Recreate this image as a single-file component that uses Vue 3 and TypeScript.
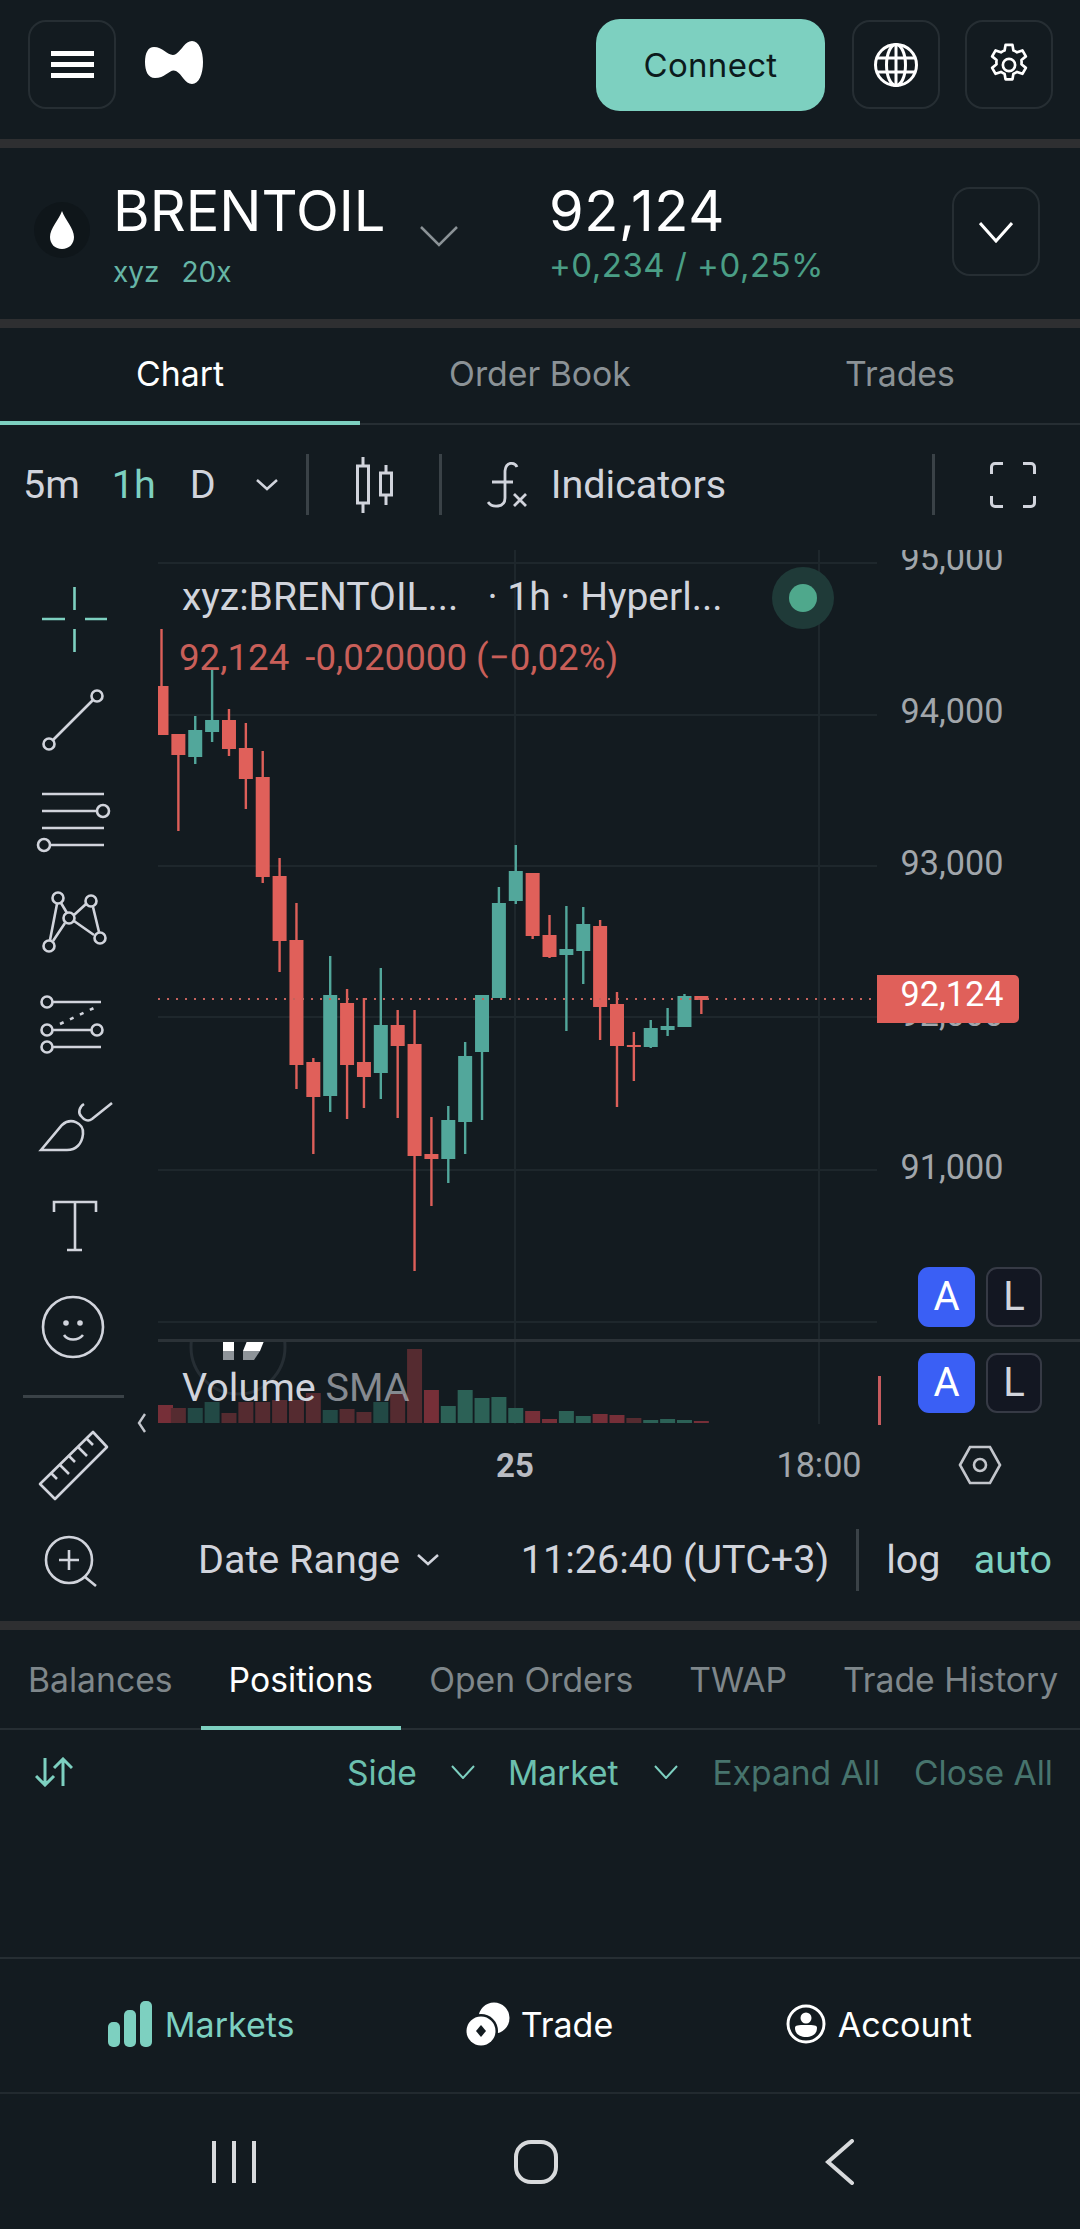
<template>
  <div class="app">
    <header class="topbar">
      <button class="icon-btn menu">
        <span /><span /><span />
      </button>
      <svg class="logo" width="58" height="43" viewBox="0 0 58 43">
        <path
          fill="#fff"
          d="M58 21C58 33 54 43 47 43C40 43 37 33 31 30C25 27 21 37 10 37C3 37 0 30 0 21C0 12 3 6 9 6C19 6 24 17 31 13C37 9 40 0 47 0C54 0 58 10 58 21Z"
        />
      </svg>
      <button class="connect">Connect</button>
      <button class="icon-btn globe">
        <svg width="46" height="46" viewBox="0 0 46 46" fill="none" stroke="#fff" stroke-width="3">
          <circle cx="23" cy="23" r="20.5" />
          <ellipse cx="23" cy="23" rx="9.5" ry="20.5" />
          <path d="M23 2.5V43.5M3 16H43M3 30H43" />
        </svg>
      </button>
      <button class="icon-btn gear">
        <svg width="46" height="46" viewBox="0 0 24 24" fill="none" stroke="#fff" stroke-width="1.4" stroke-linejoin="round">
          <circle cx="12" cy="12" r="3.2" />
          <path d="M10.2 1.5h3.6l.5 2.9c.7.2 1.3.6 1.9 1l2.8-1 1.8 3.1-2.3 1.9c.1.7.1 1.5 0 2.2l2.3 1.9-1.8 3.1-2.8-1c-.6.4-1.2.8-1.9 1l-.5 2.9h-3.6l-.5-2.9c-.7-.2-1.3-.6-1.9-1l-2.8 1-1.8-3.1 2.3-1.9c-.1-.7-.1-1.5 0-2.2L3.2 7.5 5 4.4l2.8 1c.6-.4 1.2-.8 1.9-1z" />
        </svg>
      </button>
    </header>
    <div class="band" />

    <section class="symbol">
      <div class="drop-wrap">
        <svg width="24" height="38" viewBox="0 0 24 38">
          <path fill="#fff" d="M12 0C15 9 24 17 24 26C24 33 19 38 12 38C5 38 0 33 0 26C0 17 9 9 12 0Z" />
        </svg>
      </div>
      <div class="name-col">
        <div class="name">BRENTOIL</div>
        <div class="tags"><span>xyz</span><span>20x</span></div>
      </div>
      <svg class="name-chev" width="38" height="22" viewBox="0 0 38 22" fill="none" stroke="#8b9296" stroke-width="2.5">
        <path d="M1 2L19 20L37 2" />
      </svg>
      <div class="price-col">
        <div class="price">92,124</div>
        <div class="change">+0,234 / +0,25%</div>
      </div>
      <button class="icon-btn expand">
        <svg width="34" height="22" viewBox="0 0 34 22" fill="none" stroke="#fff" stroke-width="3">
          <path d="M1 2L17 20L33 2" />
        </svg>
      </button>
    </section>
    <div class="band" />

    <nav class="chart-tabs">
      <div v-for="t in chartTabs" :key="t" class="chart-tab" :class="{ active: t === 'Chart' }">{{ t }}</div>
    </nav>

    <div class="tv-toolbar">
      <span class="tf">5m</span>
      <span class="tf tf-active">1h</span>
      <span class="tf tf-d">D</span>
      <svg class="tf-chev" width="22" height="12" viewBox="0 0 22 12" fill="none" stroke="#d1d4dc" stroke-width="2.5">
        <path d="M1 1L11 10L21 1" />
      </svg>
      <i class="vline first" />
      <svg class="candle-ico" width="38" height="56" viewBox="0 0 38 56" fill="none" stroke="#d1d4dc" stroke-width="3">
        <path d="M7 0V9M7 46V56M30 8V16M30 38V48" />
        <rect x="1.5" y="9" width="11" height="37" />
        <rect x="24.5" y="16" width="11" height="22" />
      </svg>
      <i class="vline second" />
      <svg class="fx-ico" width="40" height="48" viewBox="0 0 40 48" fill="none" stroke="#d1d4dc" stroke-width="2.8">
        <path d="M30 6C28 1 19 0 18 10V37C18 47 5 47 1 41M5 21H26M27 33L39 45M39 33L27 45" />
      </svg>
      <span class="indicators">Indicators</span>
      <i class="vline third" />
      <svg class="full-ico" width="46" height="46" viewBox="0 0 46 46" fill="none" stroke="#d1d4dc" stroke-width="3">
        <path d="M1.5 12V5C1.5 3 3 1.5 5 1.5H13M33 1.5H41C43 1.5 44.5 3 44.5 5V12M44.5 34V41C44.5 43 43 44.5 41 44.5H33M13 44.5H5C3 44.5 1.5 43 1.5 41V34" />
      </svg>
    </div>

    <div class="chart-main">
      <aside class="tools">
        <div class="tool">
          <svg class="ico active-tool" viewBox="0 0 80 80">
            <path d="M8 40H31M51 40H73M40.5 8V31M40.5 50V73" />
          </svg>
        </div>
        <div class="tool">
          <svg class="ico" viewBox="0 0 80 80">
            <circle cx="63" cy="16" r="5.5" />
            <circle cx="15" cy="64" r="5.5" />
            <path d="M59 20L19 60" />
          </svg>
        </div>
        <div class="tool">
          <svg class="ico" viewBox="0 0 80 80">
            <path d="M8 13H70M8 30H63M8 47H70M16 64H70" />
            <circle cx="69" cy="30" r="6" />
            <circle cx="10" cy="64" r="6" />
          </svg>
        </div>
        <div class="tool">
          <svg class="ico" viewBox="0 0 80 80">
            <path d="M23 22L16 58M27 21L33 31M40 33L52 22M59 25L65 50M40 39L60 53M31 41L19 59" />
            <circle cx="24" cy="16" r="5.5" />
            <circle cx="57" cy="19" r="5.5" />
            <circle cx="66" cy="56" r="5.5" />
            <circle cx="15" cy="64" r="5.5" />
            <circle cx="35" cy="36" r="5.5" />
          </svg>
        </div>
        <div class="tool">
          <svg class="ico" viewBox="0 0 80 80">
            <path d="M19 19H67M19 47H57M19 64H67" />
            <path d="M26 41L62 24" stroke-dasharray="4 7" />
            <circle cx="13" cy="19" r="5.5" />
            <circle cx="13" cy="47" r="5.5" />
            <circle cx="63" cy="47" r="5.5" />
            <circle cx="13" cy="64" r="5.5" />
          </svg>
        </div>
        <div class="tool">
          <svg class="ico" viewBox="0 0 80 80">
            <path d="M7 66L28 41C37 33 50 39 49 50C48 60 42 66 33 66Z" />
            <path d="M50 20C45 23 44 29 47 32C50 36 54 38 58 35L78 19" />
          </svg>
        </div>
        <div class="tool">
          <svg class="ico" viewBox="0 0 80 80">
            <path d="M20 27V17H62V27M41 17V65M33 65H48" />
          </svg>
        </div>
        <div class="tool">
          <svg class="ico" viewBox="0 0 80 80">
            <circle cx="39" cy="41" r="30" />
            <circle cx="32" cy="37" r="2.8" class="dot" />
            <circle cx="46" cy="37" r="2.8" class="dot" />
            <path d="M30 49C34 55 44 55 49 49" />
          </svg>
        </div>
        <div class="tools-sep" />
        <div class="tool ruler">
          <svg class="ico" viewBox="0 0 80 80">
            <path d="M6 58L59 6L73 21L21 73Z" stroke-linejoin="round" />
            <path d="M17 47L23 53M26 39L35 48M35 30L41 36M44 21L53 30M53 13L59 19" />
          </svg>
        </div>
        <div class="tool">
          <svg class="ico" viewBox="0 0 80 80">
            <circle cx="35" cy="33" r="23" />
            <path d="M51 50L62 59M35 23V43M25 33H45" />
          </svg>
        </div>
      </aside>

      <div class="chart-col">
        <div class="canvas">
          <svg class="plot" width="922" height="960" viewBox="158 550 922 960">
            <defs>
              <clipPath id="below-sep"><rect x="158" y="1342" width="922" height="90" /></clipPath>
            </defs>
            <g stroke="#1e272c" stroke-width="2">
              <line v-for="y in gridY" :key="y" x1="158" x2="877" :y1="y" :y2="y" />
              <line x1="515" x2="515" y1="550" y2="1424" />
              <line x1="819" x2="819" y1="550" y2="1424" />
            </g>

            <g clip-path="url(#below-sep)">
              <circle cx="238" cy="1347" r="47" fill="none" stroke="#262e34" stroke-width="3" />
              <rect x="223" y="1341" width="11" height="10" fill="#fff" />
              <rect x="223" y="1351" width="11" height="9" fill="#8e9499" />
              <path d="M247 1341H264L260 1351H243Z" fill="#fff" />
              <path d="M243 1351H260L254 1360H243Z" fill="#8e9499" />
            </g>

            <rect
              v-for="b in volume"
              :key="b.x"
              :x="b.x"
              :y="b.top"
              width="15"
              :height="1423 - b.top"
              :fill="volColors[b.kind]"
            />
            <rect x="878" y="1376" width="3" height="49" fill="#c65b5e" />

            <g v-for="c in candles" :key="c.x">
              <line
                :x1="c.x"
                :x2="c.x"
                :y1="c.high"
                :y2="c.low"
                :stroke="c.up ? '#52a79b' : '#dd5f59'"
                stroke-width="2.4"
              />
              <rect
                :x="c.x - 7"
                :y="c.top"
                width="14"
                :height="c.bottom - c.top"
                :fill="c.up ? '#52a79b' : '#e0605a'"
              />
            </g>

            <line x1="158" x2="877" y1="999" y2="999" stroke="#c4625c" stroke-width="2" stroke-dasharray="2 7" />
            <rect x="158" y="1339" width="922" height="3" fill="#2b3237" />

            <g class="axis">
              <text v-for="l in priceLabels" :key="l.t" x="952" :y="l.y" text-anchor="middle">{{ l.t }}</text>
            </g>
            <path d="M877 975H1014A5 5 0 0 1 1019 980V1018A5 5 0 0 1 1014 1023H877Z" fill="#e0605a" />
            <text class="last-price" x="952" y="1006" text-anchor="middle">92,124</text>

            <text class="axis bold" x="515" y="1477" text-anchor="middle">25</text>
            <text class="axis" x="819" y="1477" text-anchor="middle">18:00</text>
            <g fill="none" stroke="#c3c6cc" stroke-width="2.6">
              <path d="M960 1465L970 1447H990L1000 1465L990 1483H970Z" />
              <circle cx="980" cy="1465" r="6" />
            </g>
          </svg>

          <div class="legend">
            <div class="legend-row">
              <span>xyz:BRENTOIL...</span>
              <span class="legend-meta">· 1h · Hyperl...</span>
            </div>
            <div class="legend-row red">
              <span>92,124</span>
              <span class="legend-delta">-0,020000 (−0,02%)</span>
            </div>
          </div>
          <div class="live"><i /></div>
          <div class="volume-label">Volume <span>SMA</span></div>
          <div class="collapse">
            <svg width="10" height="20" viewBox="0 0 10 20" fill="none" stroke="#c3c6cc" stroke-width="2.4">
              <path d="M8 1L2 10L8 19" />
            </svg>
          </div>
          <div class="scale-btns one"><b>A</b><em>L</em></div>
          <div class="scale-btns two"><b>A</b><em>L</em></div>
        </div>

        <div class="range-bar">
          <span class="range">Date Range</span>
          <svg class="range-chev" width="22" height="12" viewBox="0 0 22 12" fill="none" stroke="#d1d4dc" stroke-width="2.5">
            <path d="M1 1L11 10L21 1" />
          </svg>
          <span class="clock">11:26:40 (UTC+3)</span>
          <i class="range-sep" />
          <span class="log">log</span>
          <span class="auto">auto</span>
        </div>
      </div>
    </div>
    <div class="band" />

    <nav class="account-tabs">
      <div v-for="t in accountTabs" :key="t" class="account-tab" :class="{ active: t === 'Positions' }">{{ t }}</div>
    </nav>
    <div class="filters">
      <svg width="38" height="30" viewBox="0 0 38 30" fill="none" stroke="#7dd0c0" stroke-width="3">
        <path d="M10 1V28M1 19L10 28L19 19M28 29V2M19 11L28 2L37 11" />
      </svg>
      <span class="filter side">Side</span>
      <svg class="f-chev side-chev" width="24" height="14" viewBox="0 0 24 14" fill="none" stroke="#7dd0c0" stroke-width="2">
        <path d="M1 1L12 13L23 1" />
      </svg>
      <span class="filter market">Market</span>
      <svg class="f-chev" width="24" height="14" viewBox="0 0 24 14" fill="none" stroke="#7dd0c0" stroke-width="2">
        <path d="M1 1L12 13L23 1" />
      </svg>
      <span class="filter dim expand-all">Expand All</span>
      <span class="filter dim close-all">Close All</span>
    </div>
    <div class="empty" />

    <footer class="bottom-nav">
      <div class="nav-item teal">
        <svg width="44" height="46" viewBox="0 0 44 46" fill="#7dd0c0">
          <rect x="0" y="21" width="12" height="25" rx="5" />
          <rect x="16" y="9" width="12" height="37" rx="5" />
          <rect x="32" y="0" width="12" height="46" rx="5" />
        </svg>
        Markets
      </div>
      <div class="nav-item trade">
        <svg width="44" height="44" viewBox="0 0 44 44">
          <circle cx="28" cy="16" r="15.5" fill="#fff" />
          <circle cx="15" cy="29" r="17" fill="#131b20" />
          <circle cx="15" cy="29" r="14.5" fill="#fff" />
          <path d="M15 23L20 29L15 35L10 29Z" fill="#131b20" />
        </svg>
        Trade
      </div>
      <div class="nav-item account">
        <svg width="40" height="40" viewBox="0 0 40 40">
          <circle cx="20" cy="20" r="18" fill="none" stroke="#fff" stroke-width="3" />
          <circle cx="20" cy="14" r="5.5" fill="#fff" />
          <path d="M9 24C9 21 12 21 20 21C28 21 31 21 31 24C31 30 26 33 20 33C14 33 9 30 9 24Z" fill="#fff" />
        </svg>
        Account
      </div>
    </footer>

    <div class="system-nav">
      <svg width="44" height="44" viewBox="0 0 44 44" stroke="#d8dadc" stroke-width="4">
        <path d="M2 1V43M22 1V43M42 1V43" />
      </svg>
      <svg width="46" height="46" viewBox="0 0 46 46" fill="none" stroke="#d8dadc" stroke-width="4">
        <rect x="3" y="3" width="40" height="40" rx="15" />
      </svg>
      <svg width="30" height="46" viewBox="0 0 30 46" fill="none" stroke="#d8dadc" stroke-width="4" stroke-linecap="round">
        <path d="M27 2L3 23L27 44" />
      </svg>
    </div>
  </div>
</template>

<script setup lang="ts">
type Candle = { x: number; high: number; top: number; bottom: number; low: number; up: boolean };

const chartTabs = ["Chart", "Order Book", "Trades"];
const accountTabs = ["Balances", "Positions", "Open Orders", "TWAP", "Trade History"];

const gridY = [563, 715, 866, 1017, 1170, 1322];

const priceLabels = [
  { t: "95,000", y: 570 },
  { t: "94,000", y: 723 },
  { t: "93,000", y: 875 },
  { t: "92,000", y: 1026 },
  { t: "91,000", y: 1179 },
];

// high, body top, body bottom, low, direction
const raw: [number, number, number, number, number][] = [
  [629, 686, 735, 735, 0],
  [734, 734, 755, 831, 0],
  [716, 730, 757, 764, 1],
  [669, 720, 732, 742, 1],
  [709, 720, 749, 756, 0],
  [723, 748, 779, 809, 0],
  [751, 777, 877, 883, 0],
  [858, 876, 941, 972, 0],
  [903, 940, 1065, 1089, 0],
  [1058, 1062, 1097, 1154, 0],
  [956, 995, 1096, 1112, 1],
  [989, 1003, 1065, 1119, 0],
  [998, 1062, 1077, 1108, 0],
  [968, 1025, 1073, 1099, 1],
  [1010, 1025, 1046, 1118, 0],
  [1010, 1044, 1156, 1271, 0],
  [1117, 1154, 1159, 1206, 0],
  [1106, 1120, 1159, 1183, 1],
  [1042, 1056, 1122, 1154, 1],
  [995, 995, 1052, 1120, 1],
  [887, 903, 998, 998, 1],
  [845, 871, 901, 904, 1],
  [873, 873, 936, 939, 0],
  [915, 935, 957, 958, 0],
  [906, 949, 955, 1031, 1],
  [907, 924, 951, 984, 1],
  [920, 926, 1007, 1040, 0],
  [992, 1004, 1046, 1107, 0],
  [1032, 1045, 1047, 1081, 0],
  [1020, 1028, 1047, 1048, 1],
  [1008, 1026, 1030, 1036, 1],
  [994, 996, 1027, 1027, 1],
  [996, 996, 1000, 1014, 0],
];

const candles: Candle[] = raw.map((r, i) => ({
  x: 161.5 + i * 16.87,
  high: r[0],
  top: r[1],
  bottom: r[2],
  low: r[3],
  up: r[4] === 1,
}));

const volColors: Record<string, string> = {
  r: "#552b30",
  R: "#762f38",
  g: "#224945",
  G: "#2c6156",
};

const volTops: [number, string][] = [
  [1405, "R"], [1408, "r"], [1408, "g"], [1402, "g"], [1413, "r"], [1402, "r"], [1402, "r"], [1400, "r"],
  [1400, "r"], [1393, "r"], [1410, "g"], [1409, "r"], [1412, "r"], [1402, "g"], [1394, "r"], [1349, "r"],
  [1390, "R"], [1406, "G"], [1390, "G"], [1398, "G"], [1397, "G"], [1408, "G"], [1411, "R"], [1419, "R"],
  [1411, "G"], [1416, "G"], [1414, "R"], [1415, "R"], [1418, "r"], [1420, "G"], [1419, "G"], [1420, "G"], [1421, "R"],
];

const volume = volTops.map(([top, kind], i) => ({
  x: i === 0 ? 158 : 154 + i * 16.87,
  top,
  kind,
}));
</script>

<style>
html,
body {
  margin: 0;
  background: #131b20;
}
</style>

<style scoped>
.app {
  width: 1080px;
  height: 2229px;
  background: #131b20;
  color: #fff;
  font-family: Inter, "Noto Sans", sans-serif;
  overflow: hidden;
}

button {
  font-family: inherit;
  padding: 0;
  cursor: pointer;
}

.topbar {
  height: 139px;
  display: flex;
  align-items: center;
  padding: 0 27px 0 28px;
  box-sizing: border-box;
}

.icon-btn {
  width: 88px;
  height: 89px;
  flex: none;
  background: transparent;
  border: 2px solid #262e33;
  border-radius: 18px;
  display: flex;
  align-items: center;
  justify-content: center;
}

.topbar .icon-btn {
  margin-top: -10px;
}

.menu {
  flex-direction: column;
  gap: 6px;
}

.menu span {
  width: 43px;
  height: 5px;
  background: #fff;
}

.logo {
  margin: -14px 0 0 29px;
}

.connect {
  margin: -10px 27px 0 auto;
  width: 229px;
  height: 92px;
  background: #7dd0c0;
  color: #0c1a1c;
  border: none;
  border-radius: 24px;
  font-size: 33px;
  letter-spacing: 0.3px;
}

.gear {
  margin-left: 25px;
}

.band {
  height: 9px;
  background: #2e2f31;
}

.symbol {
  height: 171px;
  display: flex;
  align-items: flex-start;
  position: relative;
}

.drop-wrap {
  width: 56px;
  height: 56px;
  margin: 54px 0 0 34px;
  border-radius: 50%;
  background: #0f161a;
  display: flex;
  align-items: center;
  justify-content: center;
}

.name-col {
  margin: 31px 0 0 23px;
  width: 307px;
}

.name,
.price {
  font-size: 56px;
  line-height: 64px;
}

.price {
  letter-spacing: 0.6px;
}

.tags {
  margin-top: 10px;
  display: flex;
  gap: 22px;
  font-size: 28px;
  line-height: 38px;
  color: #66b5a6;
}

.name-chev {
  margin-top: 77px;
}

.price-col {
  margin: 31px 0 0 91px;
}

.change {
  font-size: 33px;
  line-height: 38px;
  color: #4a9e85;
  margin-top: 3px;
  letter-spacing: 0.5px;
}

.expand {
  margin: 39px 40px 0 auto;
}

.chart-tabs {
  height: 97px;
  display: flex;
  border-bottom: 2px solid #262e33;
  box-sizing: border-box;
}

.chart-tab {
  width: 360px;
  text-align: center;
  font-size: 33.8px;
  line-height: 92px;
  color: #8b9296;
  position: relative;
}

.chart-tab.active {
  color: #fff;
}

.chart-tab.active::after {
  content: "";
  position: absolute;
  left: 0;
  right: 0;
  bottom: -2px;
  height: 4px;
  background: #7dd0c0;
}

.tv-toolbar {
  height: 125px;
  display: flex;
  align-items: center;
  padding: 0 0 6px 23px;
  box-sizing: border-box;
  font-family: Roboto, sans-serif;
  font-size: 39.5px;
  color: #d1d4dc;
}

.tf-active {
  margin-left: 32px;
  color: #7dd0c0;
}

.tf-d {
  margin-left: 34px;
}

.tf-chev {
  margin-left: 40px;
}

.vline {
  width: 3px;
  height: 61px;
  background: #3a4247;
}

.vline.first {
  margin-left: 28px;
}

.candle-ico {
  margin-left: 47px;
}

.vline.second {
  margin-left: 45px;
}

.fx-ico {
  margin-left: 45px;
}

.indicators {
  margin-left: 24px;
}

.vline.third {
  margin-left: auto;
  margin-right: 55px;
}

.full-ico {
  margin-right: 44px;
}

.chart-main {
  display: flex;
  height: 1071px;
}

.tools {
  width: 158px;
  flex: none;
  padding-top: 18px;
  box-sizing: border-box;
}

.tool {
  height: 101px;
  display: flex;
  align-items: center;
  padding-left: 34px;
}

.ico {
  width: 80px;
  height: 80px;
  fill: none;
  stroke: #d1d4dc;
  stroke-width: 2.6;
}

.ico.active-tool {
  stroke: #7dd0c0;
}

.ico .dot {
  fill: #d1d4dc;
  stroke: none;
}

.tools-sep {
  height: 3px;
  margin: 19px 34px 0 23px;
  background: #3a4247;
}

.ruler {
  margin-top: 17px;
}

.chart-col {
  width: 922px;
  display: flex;
  flex-direction: column;
}

.canvas {
  position: relative;
  height: 960px;
  font-family: Roboto, sans-serif;
}

.plot {
  display: block;
}

.axis text,
text.axis {
  font-family: Roboto, sans-serif;
  font-size: 34.2px;
  fill: #a1a6ab;
}

text.axis.bold {
  font-size: 33px;
  font-weight: 700;
  fill: #b9bcc2;
}

.last-price {
  font-family: Roboto, sans-serif;
  font-size: 34.2px;
  fill: #fff;
}

.legend {
  position: absolute;
  left: 24px;
  top: 25px;
  font-size: 39px;
  color: #d1d4dc;
}

.legend-row {
  display: flex;
  line-height: 44px;
}

.legend-row.red {
  margin: 17px 0 0 -3px;
  color: #c95f59;
  font-size: 36.7px;
}

.legend-meta {
  margin-left: 29px;
}

.legend-delta {
  margin-left: 16px;
}

.live {
  position: absolute;
  left: 614px;
  top: 17px;
  width: 62px;
  height: 62px;
  border-radius: 50%;
  background: #1f3a38;
  display: flex;
  align-items: center;
  justify-content: center;
}

.live i {
  width: 28px;
  height: 28px;
  border-radius: 50%;
  background: #4fa88c;
}

.volume-label {
  position: absolute;
  left: 24px;
  top: 816px;
  font-size: 39.5px;
  line-height: 44px;
  color: #d1d4dc;
}

.volume-label span {
  opacity: 0.6;
}

.collapse {
  position: absolute;
  left: -21px;
  top: 863px;
  line-height: 0;
}

.scale-btns {
  position: absolute;
  left: 760px;
  display: flex;
  gap: 11px;
  font-size: 40px;
}

.scale-btns.one {
  top: 717px;
}

.scale-btns.two {
  top: 803px;
}

.scale-btns b,
.scale-btns em {
  font-style: normal;
  font-weight: 400;
  width: 57px;
  height: 60px;
  line-height: 60px;
  border-radius: 11px;
  text-align: center;
  box-sizing: border-box;
}

.scale-btns b {
  background: #3a5ff5;
}

.scale-btns em {
  width: 56px;
  line-height: 56px;
  background: #131722;
  border: 2px solid #363a45;
  color: #d1d4dc;
}

.range-bar {
  flex: 1;
  display: flex;
  align-items: center;
  padding: 0 28px 12px 40px;
  font-family: Roboto, sans-serif;
  font-size: 39.5px;
  color: #d1d4dc;
}

.range-chev {
  margin-left: 17px;
}

.clock {
  margin-left: 82px;
}

.range-sep {
  width: 3px;
  height: 62px;
  margin-left: 27px;
  background: #3a4247;
}

.log {
  margin-left: 27px;
}

.auto {
  margin-left: auto;
  color: #7dd0c0;
}

.account-tabs {
  height: 100px;
  display: flex;
  border-bottom: 2px solid #262e33;
  box-sizing: border-box;
}

.account-tab {
  padding: 0 28px;
  font-size: 33.7px;
  line-height: 100px;
  color: #7f878b;
  white-space: nowrap;
  position: relative;
}

.account-tab.active {
  color: #fff;
}

.account-tab.active::after {
  content: "";
  position: absolute;
  left: 0;
  right: 0;
  bottom: -2px;
  height: 4px;
  background: #7dd0c0;
}

.filters {
  height: 86px;
  display: flex;
  align-items: center;
  padding: 0 27px 2px 35px;
  box-sizing: border-box;
}

.filter {
  font-size: 33.6px;
  color: #6cc0af;
  white-space: nowrap;
}

.side {
  margin-left: auto;
}

.f-chev {
  margin-left: 36px;
}

.f-chev.side-chev {
  margin-left: 34px;
}

.market {
  margin-left: 33px;
}

.dim {
  color: #47746d;
}

.expand-all {
  margin-left: 34px;
}

.close-all {
  margin-left: 34px;
}

.empty {
  height: 141px;
  border-bottom: 2px solid #262e33;
}

.bottom-nav {
  height: 135px;
  display: flex;
  padding: 0 33px 3px;
  border-bottom: 2px solid #222a2f;
  box-sizing: border-box;
}

.nav-item {
  flex: 1;
  display: flex;
  align-items: center;
  justify-content: center;
  gap: 13px;
  font-size: 34px;
}

.nav-item.trade {
  gap: 11px;
  padding-left: 2px;
}

.nav-item.account {
  gap: 12px;
  padding-left: 3px;
}

.nav-item.teal {
  color: #7dd0c0;
}

.system-nav {
  height: 136px;
  display: flex;
  align-items: center;
  padding-left: 212px;
}

.system-nav svg:nth-child(2) {
  margin-left: 257px;
}

.system-nav svg:nth-child(3) {
  margin-left: 266px;
}
</style>
